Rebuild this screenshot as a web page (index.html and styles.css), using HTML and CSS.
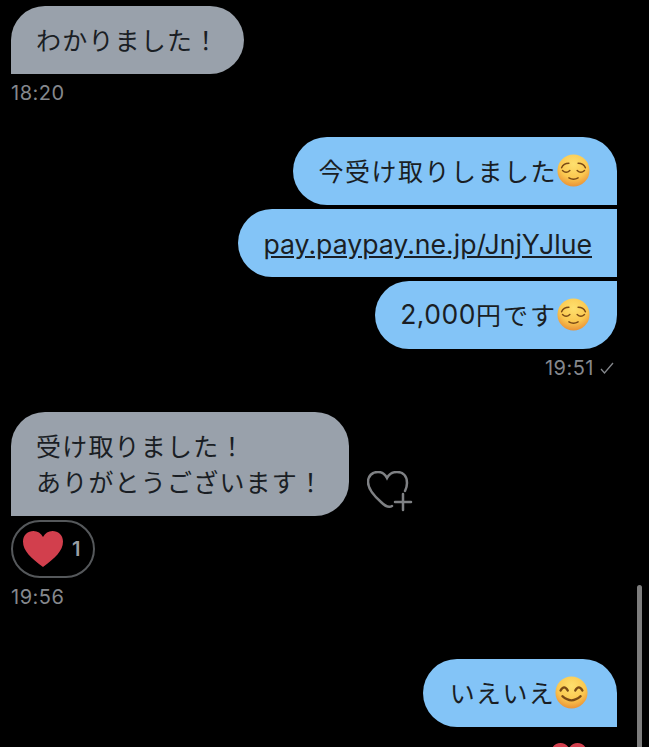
FILE: index.html
```html
<!DOCTYPE html>
<html lang="ja">
  <head>
    <meta http-equiv="content-type" content="text/html; charset=UTF-8" />
    <title>Messages</title>
    <link rel="stylesheet" href="styles.css">
  </head>

  <body>
    <svg class="defs" width="0" height="0">
      <defs>
        <radialGradient id="skin" cx="50%" cy="30%" r="72%">
          <stop offset="0" stop-color="#fee06e" />
          <stop offset="0.6" stop-color="#fbc850" />
          <stop offset="1" stop-color="#e98f35" />
        </radialGradient>
      </defs>
    </svg>

    <div class="chat">
      <div class="row">
        <div class="bubble theirs">わかりました！</div>
      </div>
      <div class="time time-theirs">18:20</div>

      <div class="group mine-group">
        <div class="bubble mine top">
          今受け取りしました<svg class="emoji" viewBox="0 0 36 36"><circle cx="18" cy="18" r="17.500" fill="url(#skin)" /><path class="face" d="M5 15q2-5 8-5M31 15q-2-5-8-5M6 18q4 4 8 0M22 18q4 4 8 0M13 26q5 3 10 0" /></svg>
        </div>
        <div class="bubble mine middle"><a class="link">pay.paypay.ne.jp/JnjYJlue</a></div>
        <div class="bubble mine bottom">
          <span class="num">2,000</span>円です<svg class="emoji" viewBox="0 0 36 36"><circle cx="18" cy="18" r="17.500" fill="url(#skin)" /><path class="face" d="M5 15q2-5 8-5M31 15q-2-5-8-5M6 18q4 4 8 0M22 18q4 4 8 0M13 26q5 3 10 0" /></svg>
        </div>
      </div>
      <div class="time time-mine">
        19:51
        <svg class="check" viewBox="0 0 14 12"><path d="M1 7l3.500 4L13 1" /></svg>
      </div>

      <div class="row row-second">
        <div class="bubble theirs">受け取りました！<br />ありがとうございます！</div>
        <svg class="add-heart" viewBox="0 0 46 41">
          <path d="M25 35C22 37 18 35 14 31 6 24 1 18 1 11 1 5 5 1 11 1c4 0 7 2 9 6 2-4 6-6 10-6 6 0 10 4 10 11 0 3-1 6-2 8" />
          <path d="M36 23v16M28 31h16" />
        </svg>
      </div>
      <div class="reaction">
        <svg class="heart" viewBox="0 0 40 36"><path d="M20 36C8 27 0 20 0 10.500 0 4 5 0 10.500 0 14.500 0 18 2 20 6c2-4 5.500-6 9.500-6C35 0 40 4 40 10.500 40 20 32 27 20 36z" /></svg>
        <span class="count">1</span>
      </div>
      <div class="time time-theirs">19:56</div>

      <div class="group last-group">
        <div class="bubble mine top last">
          いえいえ<svg class="emoji" viewBox="0 0 36 36"><circle cx="18" cy="18" r="17.500" fill="url(#skin)" /><path class="face face-thick" d="M6 16q4-7 8 0M22 16q4-7 8 0M8 22q10 9 20 0" /></svg>
        </div>
      </div>
      <svg class="heart heart-last" viewBox="0 0 40 36"><path d="M20 36C8 27 0 20 0 10.500 0 4 5 0 10.500 0 14.500 0 18 2 20 6c2-4 5.500-6 9.500-6C35 0 40 4 40 10.500 40 20 32 27 20 36z" /></svg>
    </div>

    <div class="scrollbar"></div>
  </body>
</html>
```

FILE: styles.css
```css
html,
body {
  margin: 0;
  height: 747px;
  overflow: hidden;
  background-color: #000;
}
.defs {
  position: absolute;
}
.chat {
  display: flex;
  flex-direction: column;
  padding: 6px 32px 0 11px;
  font-family: "Noto Sans CJK JP", "Inter", sans-serif;
  color: #1a1e24;
}
.row {
  display: flex;
  align-items: flex-end;
}
.row-second {
  margin-top: 33px;
}
.bubble {
  box-sizing: border-box;
  min-height: 68px;
  padding: 15px 25px 17px;
  font-size: 25px;
  line-height: 36px;
  letter-spacing: 1.200px;
  display: flex;
  align-items: center;
  white-space: nowrap;
}
.theirs {
  display: block;
  background-color: #99a1ab;
  border-radius: 34px 34px 34px 0;
}
.mine {
  align-self: flex-end;
  background-color: #83c4f7;
  padding-right: 27px;
  letter-spacing: 1.500px;
}
.top {
  border-radius: 34px 34px 0 34px;
}
.middle {
  padding: 17px 25px 15px;
  border-radius: 34px 0 0 34px;
}
.bottom {
  letter-spacing: 2px;
  border-radius: 34px 0 34px 34px;
}
.last {
  padding-left: 27px;
  padding-right: 29px;
  letter-spacing: 1.300px;
}
.group {
  display: flex;
  flex-direction: column;
  gap: 4px;
}
.mine-group {
  margin-top: 33px;
}
.last-group {
  margin-top: 51px;
}
.link {
  color: #1a1e24;
  text-decoration: underline;
  font-family: "Inter", sans-serif;
  font-size: 26.650px;
  letter-spacing: 0;
}
.num {
  font-family: "Inter", sans-serif;
  font-size: 26.500px;
  letter-spacing: 0.500px;
}
.emoji {
  width: 33px;
  height: 33px;
  flex: none;
}
.face {
  fill: none;
  stroke: #7a4a15;
  stroke-width: 1.600;
  stroke-linecap: round;
}
.face-thick {
  stroke-width: 2.400;
}
.time {
  font-family: "Inter", sans-serif;
  font-size: 20px;
  line-height: 22px;
  color: #85888d;
  letter-spacing: 0.500px;
}
.time-theirs {
  margin-top: 8px;
}
.time-mine {
  align-self: flex-end;
  display: flex;
  align-items: center;
  gap: 6px;
  margin-top: 8px;
  padding-right: 3px;
}
.check {
  width: 14px;
  height: 12px;
  fill: none;
  stroke: #85888d;
  stroke-width: 1.300;
}
.add-heart {
  width: 46px;
  height: 41px;
  margin: 0 0 4px 18px;
  fill: none;
  stroke: #7f8184;
  stroke-width: 2.500;
  stroke-linecap: round;
}
.reaction {
  box-sizing: border-box;
  width: 84px;
  height: 58px;
  margin-top: 4px;
  padding-left: 10px;
  display: flex;
  align-items: center;
  gap: 9px;
  border: 2px solid #55585b;
  border-radius: 29px;
}
.heart {
  width: 40px;
  height: 36px;
  fill: #d23f4d;
}
.count {
  font-family: "Inter", sans-serif;
  font-size: 20px;
  font-weight: 600;
  color: #9a9ea4;
}
.heart-last {
  align-self: flex-end;
  margin: 16px 30px 0 0;
  width: 36px;
  height: 32px;
}
.scrollbar {
  position: absolute;
  left: 637px;
  top: 585px;
  width: 5px;
  height: 170px;
  border-radius: 3px;
  background-color: #7d7d7d;
}
```
